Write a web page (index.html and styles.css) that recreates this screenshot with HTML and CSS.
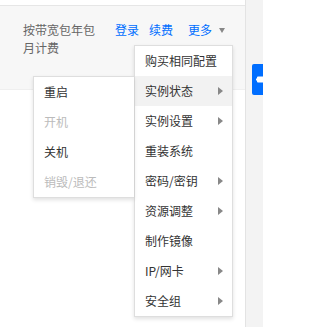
FILE: index.html
```html
<!DOCTYPE html>
<html lang="zh-CN">
<head>
<meta charset="utf-8">
<title>实例操作</title>
<link rel="stylesheet" href="styles.css">
</head>
<body>
<div class="page">
  <div class="main">
    <div class="topline"></div>
    <div class="row">
      <div class="billing">按带宽包年包<br>月计费</div>
      <div class="actions">
        <a class="link">登录</a>
        <a class="link">续费</a>
        <a class="link more">更多<span class="caret-down"></span></a>
      </div>
    </div>
  </div>
  <div class="rail"></div>
</div>

<div class="tab">
  <svg width="11" height="31" viewBox="0 0 11 31">
    <path d="M6 12.5 h5 v6 h-5 a1 1 0 0 1 -1 -1 v-1 h-1 v-2 h1 v-1 a1 1 0 0 1 1 -1 z" fill="#fff"/>
  </svg>
</div>

<ul class="menu main-menu">
  <li class="item">购买相同配置</li>
  <li class="item active">实例状态<span class="caret-right"></span></li>
  <li class="item">实例设置<span class="caret-right"></span></li>
  <li class="item">重装系统</li>
  <li class="item">密码/密钥<span class="caret-right"></span></li>
  <li class="item">资源调整<span class="caret-right"></span></li>
  <li class="item">制作镜像</li>
  <li class="item">IP/网卡<span class="caret-right"></span></li>
  <li class="item">安全组<span class="caret-right"></span></li>
</ul>

<ul class="menu sub-menu">
  <li class="item">重启</li>
  <li class="item disabled">开机</li>
  <li class="item">关机</li>
  <li class="item disabled">销毁/退还</li>
</ul>
</body>
</html>
```

FILE: styles.css
```css
html, body {
  margin: 0;
  padding: 0;
}
body {
  width: 263px;
  height: 327px;
  overflow: hidden;
  background: #fff;
  font-family: "Noto Sans CJK SC", "Noto Sans", sans-serif;
  font-size: 12px;
  color: #333;
  position: relative;
}
.page {
  display: flex;
  height: 327px;
}
.main {
  width: 245px;
  flex: none;
}
.topline {
  height: 5px;
  border-bottom: 1px solid #e6e6e6;
  background: #fff;
}
.row {
  height: 84px;
  background: #f7f7f7;
  display: flex;
  align-items: flex-start;
  padding-top: 15px;
  box-sizing: border-box;
  border-bottom: 1px solid #efefef;
}
.billing {
  margin-left: 23px;
  width: 80px;
  line-height: 18px;
  color: #666;
}
.actions {
  margin-left: 12px;
  display: flex;
  line-height: 18px;
}
.link {
  color: #006eff;
  text-decoration: none;
  margin-right: 10px;
}
.link.more {
  margin-left: 5px;
  display: flex;
  align-items: center;
}
.caret-down {
  width: 0;
  height: 0;
  border-top: 5px solid #888;
  border-left: 3.5px solid transparent;
  border-right: 3.5px solid transparent;
  margin-left: 7px;
}
.rail {
  flex: 1;
  border-left: 1px solid #e3e3e3;
  background: #f3f3f3;
}
.tab {
  position: absolute;
  left: 252px;
  top: 64px;
  width: 11px;
  height: 31px;
  background: #006eff;
  border-radius: 2px 0 0 2px;
}
.tab svg {
  display: block;
}
.menu {
  position: absolute;
  list-style: none;
  margin: 0;
  padding: 0;
  background: #fff;
  border: 1px solid #dedede;
  box-shadow: 0 2px 4px rgba(0, 0, 0, 0.12);
}
.main-menu {
  left: 134px;
  top: 45px;
  width: 97px;
}
.sub-menu {
  left: 33px;
  top: 76px;
  width: 100px;
  border-right: none;
}
.item {
  height: 30px;
  line-height: 30px;
  padding-left: 10px;
  display: flex;
  align-items: center;
  position: relative;
  color: #333;
  white-space: nowrap;
}
.item.active {
  background: #f2f2f2;
}
.item.disabled {
  color: #bbb;
}
.caret-right {
  position: absolute;
  left: 83px;
  top: 11px;
  width: 0;
  height: 0;
  border-left: 5px solid #888;
  border-top: 4px solid transparent;
  border-bottom: 4px solid transparent;
}
```
